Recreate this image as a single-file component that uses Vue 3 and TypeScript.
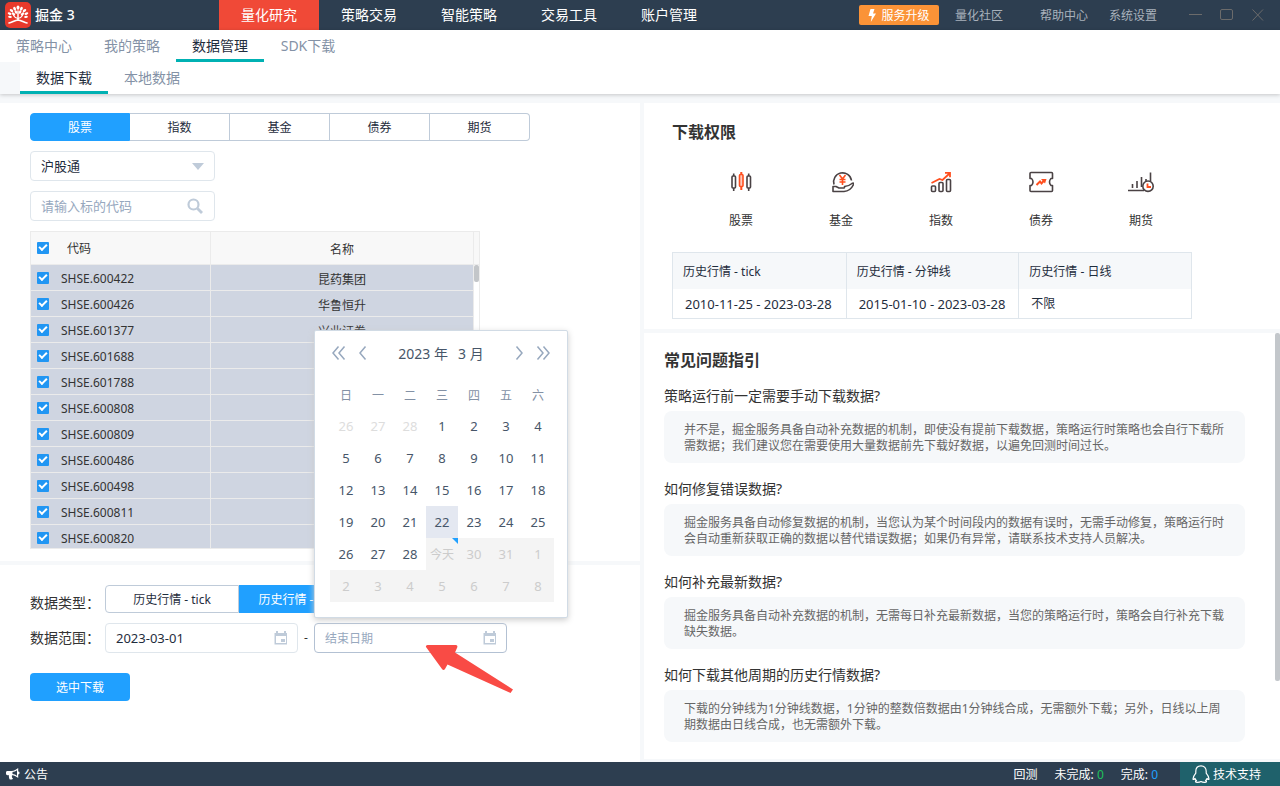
<script setup lang="ts">
import { ref } from 'vue'

interface StockRow {
  code: string
  name: string
  checked: boolean
}

interface Day {
  label: string
  state: 'normal' | 'prev' | 'disabled' | 'current' | 'today'
}

const mainNav: string[] = ['量化研究', '策略交易', '智能策略', '交易工具', '账户管理']
const subNav: string[] = ['策略中心', '我的策略', '数据管理', 'SDK下载']
const thirdNav: string[] = ['数据下载', '本地数据']
const assetTabs: string[] = ['股票', '指数', '基金', '债券', '期货']
const dataTypes: string[] = ['历史行情 - tick', '历史行情 - 分钟线']

const assetTab = ref(0)
const dataType = ref(1)
const market = ref('沪股通')
const keyword = ref('')
const startDate = ref('2023-03-01')
const endDate = ref('')
const allChecked = ref(true)

const names: Record<string, string> = {
  '600422': '昆药集团',
  '600426': '华鲁恒升',
  '601377': '兴业证券',
}
const rows = ref<StockRow[]>(
  ['600422', '600426', '601377', '601688', '601788', '600808', '600809', '600486', '600498', '600811', '600820'].map(
    (id) => ({ code: `SHSE.${id}`, name: names[id] ?? '', checked: true }),
  ),
)

function toggleAll(): void {
  rows.value.forEach((row) => (row.checked = allChecked.value))
}

const weekdays: string[] = ['日', '一', '二', '三', '四', '五', '六']

function dayAt(index: number): Day {
  const n = index - 2
  if (n < 1) return { label: String(n + 28), state: 'prev' }
  if (n === 22) return { label: '22', state: 'current' }
  if (n === 29) return { label: '今天', state: 'today' }
  if (n > 31) return { label: String(n - 31), state: 'disabled' }
  return { label: String(n), state: n > 28 ? 'disabled' : 'normal' }
}
const weeks: Day[][] = Array.from({ length: 6 }, (_, w) => Array.from({ length: 7 }, (_, d) => dayAt(w * 7 + d)))

const faqs = [
  {
    q: '策略运行前一定需要手动下载数据?',
    a: '并不是，掘金服务具备自动补充数据的机制，即使没有提前下载数据，策略运行时策略也会自行下载所需数据；我们建议您在需要使用大量数据前先下载好数据，以遍免回测时间过长。',
  },
  {
    q: '如何修复错误数据?',
    a: '掘金服务具备自动修复数据的机制，当您认为某个时间段内的数据有误时，无需手动修复，策略运行时会自动重新获取正确的数据以替代错误数据；如果仍有异常，请联系技术支持人员解决。',
  },
  {
    q: '如何补充最新数据?',
    a: '掘金服务具备自动补充数据的机制，无需每日补充最新数据，当您的策略运行时，策略会自行补充下载缺失数据。',
  },
  {
    q: '如何下载其他周期的历史行情数据?',
    a: '下载的分钟线为1分钟线数据，1分钟的整数倍数据由1分钟线合成，无需额外下载；另外，日线以上周期数据由日线合成，也无需额外下载。',
  },
]
</script>

<template>
  <div class="app">
    <header class="topbar">
      <div class="brand">
        <svg class="logo" viewBox="0 0 26 26" aria-hidden="true">
          <rect width="26" height="26" rx="5" fill="#e8392b" />
          <g fill="#fff">
            <ellipse cx="13" cy="5.6" rx="1.500" ry="2.200" />
            <ellipse cx="9.600" cy="6.600" rx="1.300" ry="1.900" transform="rotate(-28 9.600 6.600)" />
            <ellipse cx="16.400" cy="6.600" rx="1.300" ry="1.900" transform="rotate(28 16.400 6.600)" />
            <ellipse cx="6.500" cy="8.600" rx="1.300" ry="2" transform="rotate(-50 6.500 8.600)" />
            <ellipse cx="19.500" cy="8.600" rx="1.300" ry="2" transform="rotate(50 19.500 8.600)" />
            <ellipse cx="4.600" cy="11.600" rx="1.200" ry="2" transform="rotate(-68 4.600 11.600)" />
            <ellipse cx="21.400" cy="11.600" rx="1.200" ry="2" transform="rotate(68 21.400 11.600)" />
            <ellipse cx="5" cy="14.900" rx="1.100" ry="1.900" transform="rotate(-84 5 14.900)" />
            <ellipse cx="21" cy="14.900" rx="1.100" ry="1.900" transform="rotate(84 21 14.900)" />
            <ellipse cx="10.900" cy="10" rx="1.200" ry="1.900" transform="rotate(-24 10.900 10)" />
            <ellipse cx="15.100" cy="10" rx="1.200" ry="1.900" transform="rotate(24 15.100 10)" />
            <ellipse cx="8.500" cy="12" rx="1.200" ry="2" transform="rotate(-50 8.500 12)" />
            <ellipse cx="17.500" cy="12" rx="1.200" ry="2" transform="rotate(50 17.500 12)" />
          </g>
          <g fill="none" stroke="#fff" stroke-linecap="round">
            <path d="M13 9v9" stroke-width="1.500" />
            <path d="M8.500 13.500c1 1.800 2.500 2.700 4.500 3 2-.3 3.500-1.200 4.500-3" stroke-width="1.100" />
            <path d="M4 21c3-.2 5.500-2.800 9-3 3.500.2 6 2.800 9 3" stroke-width="1.700" />
          </g>
        </svg>
        <span class="brand-name">掘金 3</span>
      </div>
      <nav class="main-nav">
        <a v-for="(item, i) in mainNav" :key="item" href="#" :class="{ active: i === 0 }">{{ item }}</a>
      </nav>
      <div class="top-actions">
        <button type="button" class="upgrade">
          <svg viewBox="0 0 8 13" aria-hidden="true"><path d="M2.500 0h4L5 4.500h3L2.800 13l1-6H.5z" fill="#fff" /></svg>
          服务升级
        </button>
        <a href="#" class="community">量化社区</a>
        <a href="#" class="help">帮助中心</a>
        <a href="#" class="settings">系统设置</a>
        <div class="window-controls">
          <button type="button" aria-label="最小化">
            <svg viewBox="0 0 14 12"><path d="M0 5.500h13" /></svg>
          </button>
          <button type="button" aria-label="最大化">
            <svg viewBox="0 0 14 12"><rect x=".5" y=".5" width="12" height="10" rx="1.500" /></svg>
          </button>
          <button type="button" aria-label="关闭">
            <svg viewBox="0 0 14 12"><path d="M1.500 .5l10.500 11M12 .5L1.500 11.500" /></svg>
          </button>
        </div>
      </div>
    </header>

    <div class="subnavs">
      <nav class="tabs">
        <a v-for="(item, i) in subNav" :key="item" href="#" :class="{ active: i === 2 }">{{ item }}</a>
      </nav>
      <nav class="tabs indented">
        <a v-for="(item, i) in thirdNav" :key="item" href="#" :class="{ active: i === 0 }">{{ item }}</a>
      </nav>
    </div>

    <main class="content">
      <div class="column">
        <section class="panel picker">
          <div class="segmented asset">
            <button
              v-for="(item, i) in assetTabs"
              :key="item"
              type="button"
              :class="{ active: assetTab === i }"
              @click="assetTab = i"
            >
              {{ item }}
            </button>
          </div>
          <div class="field filter">
            <select v-model="market" aria-label="市场">
              <option>沪股通</option>
            </select>
            <svg class="caret" viewBox="0 0 12 7" aria-hidden="true"><path d="M0 0h12L6 7z" fill="#bfcbd9" /></svg>
          </div>
          <div class="field filter">
            <input v-model="keyword" type="text" placeholder="请输入标的代码" aria-label="标的代码" />
            <svg class="magnifier" viewBox="0 0 16 16" fill="none" stroke="#bfcbd9" aria-hidden="true">
              <circle cx="6.500" cy="6.500" r="5" stroke-width="2.200" />
              <path d="M10.500 10.500l4.500 4.500" stroke-width="2.800" />
            </svg>
          </div>
          <div class="grid-box">
            <table class="stocks">
              <colgroup>
                <col class="col-code" />
                <col class="col-name" />
                <col class="col-bar" />
              </colgroup>
              <thead>
                <tr>
                  <th class="code head">
                    <label><input v-model="allChecked" type="checkbox" @change="toggleAll" /><span>代码</span></label>
                  </th>
                  <th class="name">名称</th>
                  <th class="gutter"></th>
                </tr>
              </thead>
              <tbody>
                <tr v-for="row in rows" :key="row.code">
                  <td class="code">
                    <label><input v-model="row.checked" type="checkbox" /><span>{{ row.code }}</span></label>
                  </td>
                  <td class="name">{{ row.name }}</td>
                  <td class="gutter"></td>
                </tr>
              </tbody>
            </table>
            <span class="grid-thumb"></span>
          </div>
        </section>

        <section class="panel form">
          <div class="form-row">
            <span class="form-label type-label">数据类型：</span>
            <div class="segmented types">
              <button
                v-for="(item, i) in dataTypes"
                :key="item"
                type="button"
                :class="{ active: dataType === i }"
                @click="dataType = i"
              >
                {{ item }}
              </button>
            </div>
          </div>
          <div class="form-row">
            <label class="form-label" for="start-date">数据范围：</label>
            <div class="field date">
              <input id="start-date" v-model="startDate" type="text" />
              <svg class="cal" viewBox="0 0 14 14" aria-hidden="true">
                <path d="M2 0h2v2h6V0h2v2h1v11.500H.5V2H2zM2 5v7h10V5z" fill="#bfcbd9" fill-rule="evenodd" />
                <path d="M7 8h4v3H7z" fill="#bfcbd9" />
              </svg>
            </div>
            <span class="dash">-</span>
            <div class="field date focus">
              <input v-model="endDate" class="end" type="text" placeholder="结束日期" aria-label="结束日期" />
              <svg class="cal" viewBox="0 0 14 14" aria-hidden="true">
                <path d="M2 0h2v2h6V0h2v2h1v11.500H.5V2H2zM2 5v7h10V5z" fill="#bfcbd9" fill-rule="evenodd" />
                <path d="M7 8h4v3H7z" fill="#bfcbd9" />
              </svg>

              <div class="calendar">
                <div class="cal-head">
                  <button type="button" aria-label="上一年">
                    <svg viewBox="0 0 14 14"><path d="M6.500 .5L1 7l5.500 6.500M12.500 .5L7 7l5.500 6.500" /></svg>
                  </button>
                  <button type="button" aria-label="上一月">
                    <svg viewBox="0 0 14 14"><path d="M9.500 .5L4 7l5.500 6.500" /></svg>
                  </button>
                  <div class="cal-title"><span>2023 年</span><span>3 月</span></div>
                  <button type="button" aria-label="下一月">
                    <svg viewBox="0 0 14 14"><path d="M4.500 .5L10 7l-5.500 6.500" /></svg>
                  </button>
                  <button type="button" aria-label="下一年">
                    <svg viewBox="0 0 14 14"><path d="M1.500 .5L7 7l-5.500 6.500M7.500 .5L13 7l-5.500 6.500" /></svg>
                  </button>
                </div>
                <table class="days">
                  <thead>
                    <tr>
                      <th v-for="d in weekdays" :key="d">{{ d }}</th>
                    </tr>
                  </thead>
                  <tbody>
                    <tr v-for="(week, w) in weeks" :key="w">
                      <td v-for="(day, d) in week" :key="d" :class="day.state">
                        <button type="button" :disabled="day.state === 'disabled' || day.state === 'today'">
                          {{ day.label }}
                        </button>
                      </td>
                    </tr>
                  </tbody>
                </table>
              </div>

              <svg class="pointer" viewBox="0 0 88 50" aria-hidden="true">
                <path
                  d="M2.500 1H31q2 .5 1.200 2.500L30 8.500l58 37-2.500 3.500L22.500 20.500 20 25q-1.500 2-3 0L1 3Q.5 1.200 2.500 1z"
                  fill="#f94b45"
                />
              </svg>
            </div>
          </div>
          <button type="button" class="primary">选中下载</button>
        </section>
      </div>

      <div class="column right">
        <section class="panel rights">
          <h2>下载权限</h2>
          <ul class="kinds">
            <li>
              <svg viewBox="0 0 26 26" fill="none" stroke="#4a4244" stroke-width="1.600" aria-hidden="true">
                <rect x="4" y="7" width="3.500" height="12" rx="1" />
                <path d="M5.700 4.500V7M5.700 19v3" />
                <rect x="19" y="7" width="3.500" height="12" rx="1" />
                <path d="M20.700 4.500V7M20.700 19v3" />
                <g stroke="#ff4f1f">
                  <rect x="11.500" y="5.500" width="3.500" height="12" rx="1" fill="#ffc9bb" />
                  <path d="M13.300 3v2.500M13.300 17.500v3.500" stroke-width="2" />
                </g>
              </svg>
              <span>股票</span>
            </li>
            <li>
              <svg viewBox="-1 0 26 26" fill="none" stroke="#4a4244" stroke-width="1.600" aria-hidden="true">
                <path d="M5 15.500A9 9 0 1 1 22.500 11.500" />
                <path
                  d="M4 17.500h3l3 1.500h4q2 .2 1.500-1.500 4.500-.5 7.500-3 2-1.200 1.500 1-3 6.500-9.500 7H4z"
                  stroke-linejoin="round"
                />
                <path d="M10.500 6l3 4 3-4M13.500 10v6M10.500 10.500h6M10.500 13h6" stroke="#ff4f1f" />
              </svg>
              <span>基金</span>
            </li>
            <li>
              <svg viewBox="0 0 26 26" fill="none" stroke="#4a4244" stroke-width="1.600" aria-hidden="true">
                <rect x="3.500" y="17" width="4" height="5.500" rx="1" />
                <rect x="11" y="13.500" width="4" height="9" rx="1" />
                <rect x="18.500" y="10.500" width="4" height="12" rx="1" />
                <path d="M3.500 14l8-4 3 1 7-6.500M17 3.800h5v4.500" stroke="#ff4f1f" stroke-width="1.800" />
              </svg>
              <span>指数</span>
            </li>
            <li>
              <svg viewBox="0 0 26 26" fill="none" stroke="#4a4244" stroke-width="1.600" aria-hidden="true">
                <path
                  d="M3 3.500h20.500q1 0 1 1V9.500h-1.500q-1.500 1.500-1.500 3.500t1.500 3.500h1.500v5q0 1-1 1H3q-1 0-1-1v-5h1.500Q5 15 5 13T3.500 9.500H2v-5q0-1 1-1z"
                  stroke-linejoin="round"
                />
                <path d="M8.500 16l3.500-3.500 1.500 2 3-3.500" stroke="#ff4f1f" stroke-width="2" />
                <path d="M13 10h5.500l-1.500 4.500z" fill="#ff4f1f" stroke="none" />
              </svg>
              <span>债券</span>
            </li>
            <li>
              <svg viewBox="-1 0 26 26" fill="none" stroke="#4a4244" stroke-width="1.600" aria-hidden="true">
                <path d="M-1 21.500h16M3.500 19v-4M8 19v-7M12.500 18V8M17 10v2M21.500 3.500v9" />
                <circle cx="19" cy="17.200" r="5.200" fill="#fff" />
                <path d="M18.500 14.500v3.500h3.500" stroke="#ff4f1f" stroke-width="1.800" />
              </svg>
              <span>期货</span>
            </li>
          </ul>
          <table class="perm">
            <thead>
              <tr>
                <th>历史行情 - tick</th>
                <th>历史行情 - 分钟线</th>
                <th>历史行情 - 日线</th>
              </tr>
            </thead>
            <tbody>
              <tr>
                <td>2010-11-25 - 2023-03-28</td>
                <td>2015-01-10 - 2023-03-28</td>
                <td>不限</td>
              </tr>
            </tbody>
          </table>
        </section>

        <section class="panel faq">
          <h2>常见问题指引</h2>
          <article v-for="item in faqs" :key="item.q">
            <h3>{{ item.q }}</h3>
            <p>{{ item.a }}</p>
          </article>
          <span class="faq-thumb"></span>
        </section>
      </div>
    </main>

    <footer class="statusbar">
      <a href="#" class="notice">
        <svg viewBox="0 0 14 12" aria-hidden="true">
          <path
            d="M12.200 0v3.600a1.200 1.200 0 0 1 0 2.800V10C10.500 8.500 8.500 7.400 6.200 7.200c-.6.500-.5 1.300 0 1.700-.4.700.2 1.300.9 1.700-.6 1.200-2.700 1.200-3.600.6-.4-1.300-.9-2.400-.5-4H1.500C.6 7.200 0 6.700 0 5.800V4.500C0 3.500.6 3 1.500 3H5.500C8 3 10.500 1.500 12.200 0zM11 2.300C9.600 3.300 8 4 6.500 4.100v2c1.500.1 3.100.8 4.500 1.800z"
            fill="#fff"
            fill-rule="evenodd"
          />
        </svg>
        <span>公告</span>
      </a>
      <div class="stats">
        <span>回测</span>
        <span>未完成: <b class="green">0</b></span>
        <span>完成: <b class="blue">0</b></span>
      </div>
      <a href="#" class="support">
        <svg viewBox="0 0 18 18" fill="none" stroke="#fff" stroke-width="1.200" stroke-linejoin="round" aria-hidden="true">
          <path
            d="M9 .8c-3.300 0-5.200 2.400-5.200 5.400v2C2.300 10 1 12 1 14c.2.900 1 .5 2-.5.300 1 .8 1.700 1.500 2.300-1.500.5-1.300 1.500.8 1.500 1.700 0 2.900-.3 3.700-.8.8.5 2 .8 3.700.8 2.100 0 2.300-1 .8-1.500.7-.6 1.200-1.300 1.500-2.300 1 1 1.800 1.400 2 .5 0-2-1.300-4-2.800-5.800v-2C14.200 3.200 12.300.8 9 .8z"
          />
        </svg>
        <span>技术支持</span>
      </a>
    </footer>
  </div>
</template>

<style>
html,
body {
  margin: 0;
  background: #f6f8fa;
}
</style>

<style scoped>
.app {
  display: flex;
  flex-direction: column;
  height: 100vh;
  overflow: hidden;
  background: #f6f8fa;
  color: #333;
  font-family: 'Noto Sans', 'Noto Sans CJK SC', sans-serif;
  font-size: 12px;
  line-height: 16px;
}
.app *,
.app *::after {
  box-sizing: border-box;
}
button,
input,
select {
  margin: 0;
  font-family: inherit;
}
button {
  padding: 0;
  border: 0;
  background: none;
  color: inherit;
  font-size: 12px;
  cursor: pointer;
}
a {
  color: inherit;
  text-decoration: none;
}
svg {
  flex: none;
}

/* top bar */
.topbar {
  display: flex;
  flex: none;
  height: 30px;
  background: #2d3e50;
  color: #fff;
}
.brand {
  display: flex;
  align-items: center;
  gap: 4px;
  width: 219px;
  padding-left: 5px;
}
.logo {
  width: 26px;
  height: 26px;
}
.brand-name {
  font-size: 14px;
  font-weight: 500;
}
.main-nav {
  display: flex;
}
.main-nav a {
  width: 100px;
  font-size: 14px;
  line-height: 30px;
  text-align: center;
}
.main-nav .active {
  background: #f04937;
}
.top-actions {
  display: flex;
  align-items: center;
  margin-left: auto;
  padding-right: 15px;
  color: #a9b2bc;
}
.top-actions a {
  padding-top: 2px;
}
.upgrade {
  display: flex;
  align-items: center;
  justify-content: center;
  gap: 5px;
  width: 80px;
  height: 20px;
  border-radius: 2px;
  background: #fb9337;
  color: #fff;
}
.upgrade svg {
  width: 8px;
  height: 13px;
}
.community {
  margin-left: 16px;
}
.help {
  margin-left: 37px;
}
.settings {
  margin-left: 21px;
}
.window-controls {
  display: flex;
  gap: 17px;
  margin-left: 32px;
}
.window-controls button {
  display: flex;
}
.window-controls svg {
  width: 14px;
  height: 12px;
  fill: none;
  stroke: #6b6b6b;
}

/* secondary navigation */
.subnavs {
  position: relative;
  z-index: 1;
  flex: none;
  background: #fff;
  box-shadow: 0 1px 4px rgba(0, 0, 0, 0.2);
}
.tabs {
  display: flex;
  height: 32px;
}
.indented {
  border-left: 20px solid #f6f8fa;
}
.tabs a {
  width: 88px;
  border-bottom: 3px solid transparent;
  color: #8492a6;
  font-size: 14px;
  line-height: 32px;
  text-align: center;
}
.tabs .active {
  border-color: #00b1b3;
  color: #1f2d3d;
}

/* page body */
.content {
  display: grid;
  flex: 1;
  grid-template-columns: 1fr 1fr;
  min-height: 0;
  padding-top: 9px;
}
.column {
  display: flex;
  flex-direction: column;
  gap: 4px;
  min-width: 0;
  min-height: 0;
}
.right {
  padding: 0 0 3px 4px;
}
.panel {
  background: #fff;
}

.segmented {
  display: flex;
}
.segmented button {
  height: 28px;
  border: 1px solid #bfcbd9;
  border-left-width: 0;
  background: #fff;
  color: #1f2d3d;
}
.segmented button:first-child {
  border-left-width: 1px;
  border-radius: 4px 0 0 4px;
}
.segmented button:last-child {
  border-radius: 0 4px 4px 0;
}
.segmented button.active {
  border-color: #20a0ff;
  background: #20a0ff;
  color: #fff;
}
.asset button {
  width: 100px;
}
.types button {
  width: 134px;
}

.picker {
  display: flex;
  flex: none;
  flex-direction: column;
  align-items: flex-start;
  gap: 10px;
  padding: 10px 30px 12px;
}
.field {
  position: relative;
  height: 30px;
}
.filter {
  width: 185px;
}
.field select,
.field input {
  width: 100%;
  height: 30px;
  padding: 0 30px 0 10px;
  border: 1px solid #dfe6ec;
  border-radius: 4px;
  outline: 0;
  appearance: none;
  background: #fff;
  color: #1f2d3d;
  font-size: 13px;
}
.field input::placeholder {
  color: #97a8be;
}
.caret,
.magnifier,
.cal {
  position: absolute;
  pointer-events: none;
}
.caret {
  top: 12px;
  right: 11px;
  width: 12px;
  height: 7px;
}
.magnifier {
  top: 7px;
  right: 12px;
  width: 16px;
  height: 16px;
}

/* stock table */
.grid-box {
  position: relative;
  width: 450px;
  height: 318px;
  overflow: hidden;
  border: 1px solid #ebebeb;
}
.stocks {
  width: 100%;
  border-collapse: separate;
  border-spacing: 0;
  table-layout: fixed;
}
.col-code {
  width: 180px;
}
.col-bar {
  width: 5px;
}
.stocks th,
.stocks td {
  padding: 0;
  border-right: 1px solid #ebebeb;
  border-bottom: 1px solid #ebebeb;
}
.stocks th {
  height: 33px;
  background: #f8f8f8;
  font-weight: 400;
}
.stocks td {
  height: 26px;
  background: #cfd5e1;
}
.stocks .gutter {
  border-right: 0;
}
.stocks td.gutter {
  border-bottom: 0;
  background: #fff;
}
.stocks .name {
  padding-top: 3px;
  text-align: center;
}
.stocks td.name {
  padding-top: 5px;
}
.stocks label {
  display: flex;
  align-items: center;
  gap: 12px;
  padding-left: 6px;
}
.stocks label span {
  padding-top: 2px;
}
.stocks .head label {
  gap: 18px;
}
.stocks input {
  position: relative;
  width: 12px;
  height: 12px;
  border-radius: 1px;
  appearance: none;
  background: #fff;
}
.stocks input:checked {
  background: #2196f3;
}
.stocks input:checked::after {
  position: absolute;
  top: 2px;
  left: 2px;
  width: 8px;
  height: 5px;
  border: solid #fff;
  border-width: 0 0 2px 2px;
  content: '';
  transform: rotate(-45deg);
}
.grid-thumb {
  position: absolute;
  top: 33px;
  right: 0;
  width: 5px;
  height: 17px;
  border-radius: 2px;
  background: #c3c6c9;
}

/* download form */
.form {
  flex: 1;
  padding: 20px 30px;
}
.form-row {
  display: flex;
  align-items: center;
  margin-bottom: 10px;
}
.form-label {
  width: 75px;
  font-size: 14px;
  white-space: nowrap;
}
.type-label {
  padding-top: 8px;
}
.date {
  width: 193px;
}
.date input.end {
  font-size: 12px;
}
.date.focus > input {
  border-color: #b3c1d3;
}
.cal {
  top: 8px;
  right: 10px;
  width: 14px;
  height: 14px;
}
.dash {
  width: 16px;
  text-align: center;
}
.primary {
  width: 100px;
  height: 28px;
  margin-top: 10px;
  border-radius: 4px;
  background: #20a0ff;
  color: #fff;
}

/* date popover */
.calendar {
  position: absolute;
  z-index: 2;
  bottom: 35px;
  left: 0;
  width: 254px;
  padding: 0 13px 15px 15px;
  border: 1px solid #d1dbe5;
  border-radius: 2px;
  background: #fff;
  box-shadow: 0 2px 6px #ccc;
}
.cal-head {
  display: flex;
  align-items: center;
  gap: 10px;
  height: 44px;
  padding: 0 4px 0 2px;
}
.cal-head button {
  display: flex;
}
.cal-head svg {
  width: 14px;
  height: 14px;
  fill: none;
  stroke: #97a8be;
  stroke-width: 1.5;
}
.cal-title {
  display: flex;
  flex: 1;
  justify-content: center;
  gap: 10px;
  padding-top: 2px;
  color: #475669;
  font-size: 14px;
  line-height: 22px;
  white-space: nowrap;
}
.days {
  border-spacing: 0;
  color: #475669;
  text-align: center;
}
.days th {
  width: 32px;
  height: 35px;
  padding: 7px 0 0;
  color: #8391a5;
  font-size: 12px;
  font-weight: 400;
}
.days td {
  position: relative;
  width: 32px;
  height: 32px;
  padding: 0;
}
.days td button {
  display: block;
  width: 32px;
  height: 32px;
  font-size: 13px;
}
.days .prev {
  color: #ddd;
}
.days .disabled,
.days .today {
  background: #f4f4f4;
  color: #ccc;
}
.days .current {
  background: #e4e8f1;
}
.days .today button {
  font-size: 12px;
}
.days .today::after {
  position: absolute;
  top: 0;
  right: 0;
  border-top: 6px solid #20a0ff;
  border-left: 6px solid transparent;
  content: '';
}
.pointer {
  position: absolute;
  top: 21px;
  left: 111px;
  width: 88px;
  height: 50px;
  pointer-events: none;
}

/* permissions */
.rights {
  flex: none;
  padding: 17px 88px 10px 28px;
}
h2 {
  margin: 0;
  color: #333;
  font-size: 16px;
  font-weight: 700;
  line-height: 24px;
}
.kinds {
  display: flex;
  margin: 25px 0 23px;
  padding: 0 0 0 19px;
  list-style: none;
}
.kinds li {
  display: flex;
  flex-direction: column;
  align-items: center;
  gap: 18px;
  width: 100px;
}
.kinds svg {
  width: 26px;
  height: 26px;
}
.perm {
  width: 100%;
  border: 1px solid #dfe6ec;
  border-spacing: 0;
  table-layout: fixed;
  color: #1f2d3d;
  text-align: left;
}
.perm th {
  height: 36px;
  padding: 2px 10px 0;
  background: #f6f8fa;
  font-weight: 400;
}
.perm td {
  height: 29px;
  padding: 0 0 0 12px;
  font-size: 13px;
  white-space: nowrap;
}
.perm td:last-child {
  font-size: 12px;
}
.perm th + th,
.perm td + td {
  border-left: 1px solid #dfe6ec;
}

/* faq */
.faq {
  position: relative;
  flex: 1;
  min-height: 0;
  padding: 15px 35px 0 20px;
  overflow: hidden;
}
.faq h2 {
  margin-bottom: 14px;
}
.faq h3 {
  margin: 0 0 5px;
  font-size: 14px;
  font-weight: 400;
  line-height: 20px;
}
.faq p {
  min-height: 52px;
  margin: 0 0 16px;
  padding: 11px 20px 9px;
  border-radius: 8px;
  background: #f6f8fa;
  color: #666;
}
.faq-thumb {
  position: absolute;
  top: 0;
  right: 0;
  width: 5px;
  height: 348px;
  border-radius: 2px;
  background: #c3c7cb;
}

/* status bar */
.statusbar {
  display: flex;
  flex: none;
  align-items: center;
  height: 24px;
  background: #2d3e50;
  color: #fff;
}
.statusbar span {
  padding-top: 2px;
}
.notice {
  display: flex;
  align-items: center;
  gap: 4px;
  padding-left: 6px;
}
.notice svg {
  width: 14px;
  height: 12px;
}
.stats {
  display: flex;
  gap: 17px;
  margin-left: auto;
  padding-right: 22px;
}
.stats b {
  font-weight: 400;
}
.green {
  color: #1fc15b;
}
.blue {
  color: #20a0ff;
}
.support {
  display: flex;
  align-items: center;
  gap: 3px;
  width: 100px;
  height: 24px;
  padding-left: 12px;
  background: #1f616b;
}
.support svg {
  width: 18px;
  height: 18px;
}
</style>
